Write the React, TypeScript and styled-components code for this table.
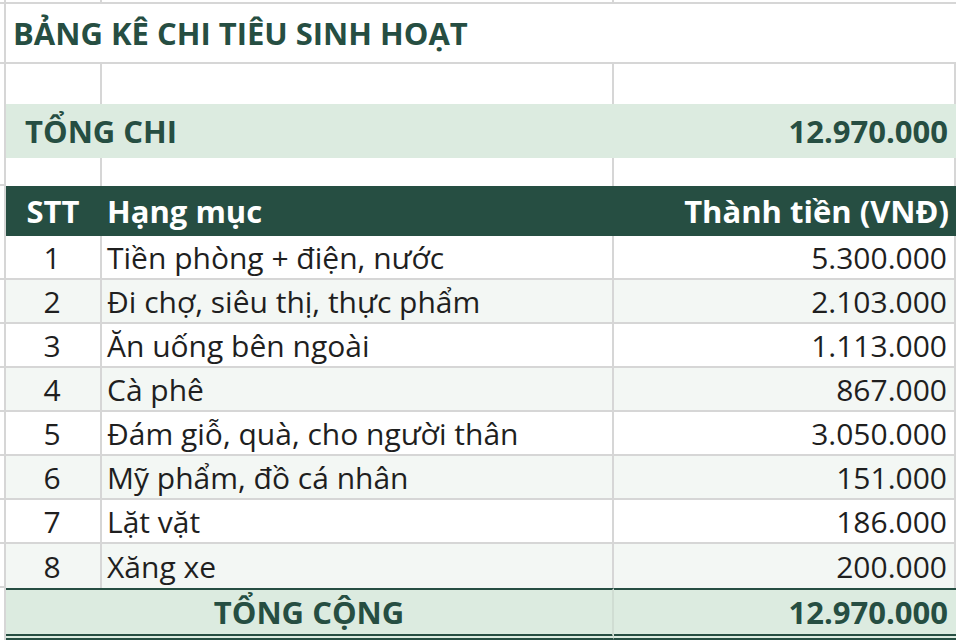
import React from "react";
import styled, { createGlobalStyle } from "styled-components";

const GlobalStyle = createGlobalStyle`
  html, body {
    margin: 0;
    padding: 0;
    background: #ffffff;
  }
  body {
    font-family: "Open Sans", "Noto Sans", Arial, sans-serif;
    color: #1f1f1f;
  }
`;

const DARK = "#264e42";
const LIGHT = "#dcebe0";
const STRIPE = "#f3f7f4";
const GRID = "#d6d6d6";

type RowItem = { stt: number; name: string; amount: string };

const items: RowItem[] = [
  { stt: 1, name: "Tiền phòng + điện, nước", amount: "5.300.000" },
  { stt: 2, name: "Đi chợ, siêu thị, thực phẩm", amount: "2.103.000" },
  { stt: 3, name: "Ăn uống bên ngoài", amount: "1.113.000" },
  { stt: 4, name: "Cà phê", amount: "867.000" },
  { stt: 5, name: "Đám giỗ, quà, cho người thân", amount: "3.050.000" },
  { stt: 6, name: "Mỹ phẩm, đồ cá nhân", amount: "151.000" },
  { stt: 7, name: "Lặt vặt", amount: "186.000" },
  { stt: 8, name: "Xăng xe", amount: "200.000" },
];

const Sheet = styled.div`
  width: 956px;
  height: 640px;
  overflow: hidden;
`;

const Row = styled.div<{ $h: number }>`
  display: grid;
  grid-template-columns: 6px 96px 512px 342px;
  height: ${(p) => p.$h}px;
`;

const Cell = styled.div<{
  $span?: number;
  $right?: boolean;
  $bottom?: boolean;
  $align?: "left" | "center" | "right";
  $bg?: string;
}>`
  box-sizing: border-box;
  grid-column: span ${(p) => p.$span ?? 1};
  display: flex;
  align-items: center;
  justify-content: ${(p) =>
    p.$align === "right" ? "flex-end" : p.$align === "center" ? "center" : "flex-start"};
  padding: 0 7px 0 5px;
  background: ${(p) => p.$bg ?? "transparent"};
  border-right: ${(p) => (p.$right ? `2px solid ${GRID}` : "none")};
  border-bottom: ${(p) => (p.$bottom ? `2px solid ${GRID}` : "none")};
  white-space: nowrap;
  overflow: hidden;
`;

const Gutter = styled.div<{ $bottom?: boolean }>`
  box-sizing: border-box;
  border-right: 2px solid ${GRID};
  border-bottom: ${(p) => (p.$bottom ? `2px solid ${GRID}` : "none")};
`;

const Title = styled.span`
  font-size: 31px;
  font-weight: 700;
  color: ${DARK};
`;

const BandLabel = styled.span`
  font-size: 31px;
  font-weight: 700;
  color: ${DARK};
`;

const HeadText = styled.span`
  font-size: 31px;
  font-weight: 700;
  color: #ffffff;
`;

const DataText = styled.span`
  font-size: 30px;
  color: #1f1f1f;
`;

const HeaderRow = styled(Row)`
  background: ${DARK};
`;

const BandRow = styled.div`
  display: grid;
  grid-template-columns: 6px 950px;
  height: 54px;
`;

const Band = styled.div`
  box-sizing: border-box;
  background: ${LIGHT};
  display: flex;
  align-items: center;
  justify-content: space-between;
  padding: 0 8px 0 19px;
`;

const TotalRow = styled.div`
  display: grid;
  grid-template-columns: 6px 608px 342px;
  height: 52px;
`;

const TotalCell = styled.div<{ $align: "center" | "right"; $right?: boolean }>`
  box-sizing: border-box;
  background: ${LIGHT};
  border-top: 2px solid ${DARK};
  border-bottom: 6px double ${DARK};
  border-right: ${(p) => (p.$right ? `2px solid #d0ddd3` : "none")};
  display: flex;
  align-items: center;
  justify-content: ${(p) => (p.$align === "right" ? "flex-end" : "center")};
  padding: 0 8px;
`;

export default function App() {
  return (
    <Sheet>
      <GlobalStyle />
      <Row $h={4}>
        <Gutter $bottom />
        <Cell $right $bottom />
        <Cell $right $bottom />
        <Cell $bottom />
      </Row>
      <Row $h={60}>
        <Gutter $bottom />
        <Cell $span={3} $bottom style={{ paddingLeft: 7 }}>
          <Title>BẢNG KÊ CHI TIÊU SINH HOẠT</Title>
        </Cell>
      </Row>
      <Row $h={40}>
        <Gutter />
        <Cell $right />
        <Cell $right />
        <Cell $right />
      </Row>
      <BandRow>
        <Gutter />
        <Band>
          <BandLabel>TỔNG CHI</BandLabel>
          <BandLabel>12.970.000</BandLabel>
        </Band>
      </BandRow>
      <Row $h={28}>
        <Gutter $bottom />
        <Cell $right />
        <Cell $right />
        <Cell $right />
      </Row>
      <HeaderRow $h={50}>
        <Gutter style={{ background: "#fff" }} />
        <Cell $align="center">
          <HeadText>STT</HeadText>
        </Cell>
        <Cell>
          <HeadText>Hạng mục</HeadText>
        </Cell>
        <Cell $align="right">
          <HeadText>Thành tiền (VNĐ)</HeadText>
        </Cell>
      </HeaderRow>
      {items.map((it, i) => {
        const bg = i % 2 === 1 ? STRIPE : "#ffffff";
        const last = i === items.length - 1;
        return (
          <Row $h={44} key={it.stt}>
            <Gutter $bottom />
            <Cell $align="center" $right $bottom={!last} $bg={bg}>
              <DataText>{it.stt}</DataText>
            </Cell>
            <Cell $right $bottom={!last} $bg={bg}>
              <DataText>{it.name}</DataText>
            </Cell>
            <Cell $align="right" $right $bottom={!last} $bg={bg}>
              <DataText>{it.amount}</DataText>
            </Cell>
          </Row>
        );
      })}
      <TotalRow>
        <Gutter />
        <TotalCell $align="center" $right>
          <BandLabel>TỔNG CỘNG</BandLabel>
        </TotalCell>
        <TotalCell $align="right">
          <BandLabel>12.970.000</BandLabel>
        </TotalCell>
      </TotalRow>
    </Sheet>
  );
}
